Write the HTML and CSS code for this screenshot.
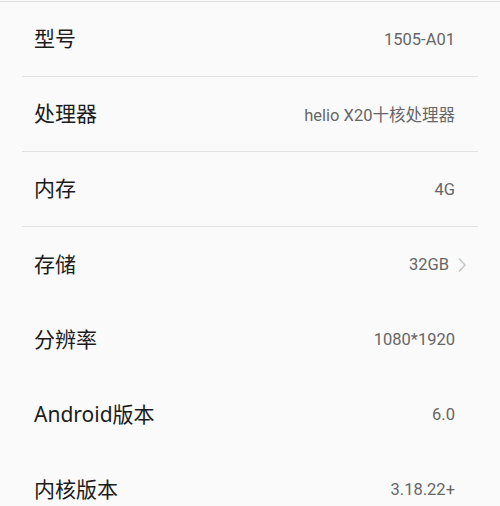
FILE: index.html
```html
<!DOCTYPE html>
<html lang="zh-CN">
<head>
  <meta charset="UTF-8">
  <meta name="viewport" content="width=device-width, initial-scale=1.0">
  <title>关于手机</title>
  <link rel="stylesheet" href="styles.css">
</head>
<body>
  <ul class="spec-list">
    <li class="spec-row lined">
      <span class="spec-label">型号</span>
      <span class="spec-value">1505-A01</span>
    </li>
    <li class="spec-row lined">
      <span class="spec-label">处理器</span>
      <span class="spec-value">helio X20十核处理器</span>
    </li>
    <li class="spec-row lined">
      <span class="spec-label">内存</span>
      <span class="spec-value">4G</span>
    </li>
    <li class="spec-row">
      <span class="spec-label">存储</span>
      <span class="spec-value">32GB</span>
      <svg class="chevron" width="10" height="16" viewBox="0 0 10 16">
        <path d="M2 1.5 L8 8 L2 14.5" fill="none" stroke="#c4c4c4" stroke-width="1.4"/>
      </svg>
    </li>
    <li class="spec-row">
      <span class="spec-label">分辨率</span>
      <span class="spec-value">1080*1920</span>
    </li>
    <li class="spec-row">
      <span class="spec-label">Android版本</span>
      <span class="spec-value">6.0</span>
    </li>
    <li class="spec-row">
      <span class="spec-label">内核版本</span>
      <span class="spec-value">3.18.22+</span>
    </li>
  </ul>
</body>
</html>
```

FILE: styles.css
```css
body {
  margin: 0;
  background: #fafafa;
  font-family: 'Noto Sans', 'Noto Sans CJK SC', sans-serif;
  overflow: hidden;
}

.spec-list {
  list-style: none;
  margin: 1px 0 0;
  padding: 0 22px;
  border-top: 1px solid #e2e2e2;
}

.spec-row {
  position: relative;
  display: flex;
  align-items: center;
  height: 75px;
  padding: 0 23px 0 12px;
}

.spec-row.lined {
  height: 74px;
  border-bottom: 1px solid #e2e2e2;
}

.spec-label {
  flex: 1;
  margin-bottom: 4px;
  font-size: 21px;
  color: #1c1c1c;
}

.spec-value {
  font-family: Roboto, 'Noto Sans CJK SC', sans-serif;
  font-size: 16.5px;
  color: #666;
}

.chevron {
  position: absolute;
  right: 11px;
  top: 50%;
  margin-top: -8px;
}

.spec-row:has(.chevron) .spec-value {
  margin-right: 6px;
}
```
